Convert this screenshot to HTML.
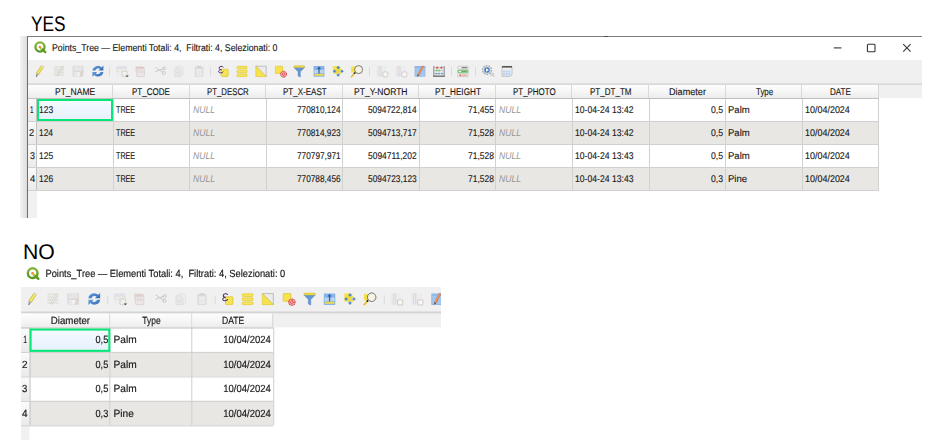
<!DOCTYPE html>
<html lang="it"><head><meta charset="utf-8"><title>Points_Tree</title>
<style>
html,body{margin:0;padding:0;background:#fff}
body{width:940px;height:440px;overflow:hidden;position:relative;text-rendering:geometricPrecision;font-family:"Liberation Sans",sans-serif;color:#161616}
.big{position:absolute;font-size:21.2px;line-height:22px;color:#000;white-space:nowrap}
.big span{display:inline-block;transform-origin:0 50%}
.win{position:absolute;transform-origin:0 0;font-size:9.8px}
.win *{position:absolute;box-sizing:border-box}
.x{height:12px;line-height:12px;white-space:nowrap;-webkit-text-stroke:.12px #1a1a1a}
.w2 .x{-webkit-text-stroke:.16px #1a1a1a}
.w2 .null{-webkit-text-stroke:0}
.x span{position:static;display:inline-block;white-space:nowrap;transform-origin:0 50%}
.ic{overflow:visible}
.tb{left:0;top:0;background:#f0f0f0}
.tbl{background:linear-gradient(#e2e2e2,#d6d6d6)}
.w2 .tbl{background:#d3d3d3}
.sep{top:7.6px;width:1px;height:8.4px;background:#dcdcdc}
.hbg{left:0;background:#f0f0f0}
.rh{left:0;background:#f1f1f1}
.h{background:linear-gradient(#fdfdfd,#f6f6f6 50%,#ececec);border-right:1px solid #d9d9d9}
.rhc{background:linear-gradient(#fbfbfb,#f3f3f3 50%,#eaeaea)}
.vl.v0{background:#c2c2c2}
.row{background:#fff}
.row.alt{background:#e9e7e4}
.null{-webkit-text-stroke:0}
.null span{font-style:italic;color:#969696}
.vl{width:1px;background:#d1d1d1}
.hl{height:1px;background:#d1d1d1}
.hl.first{background:#bfbfbf}
.sel{border:2px solid #08e678;background:linear-gradient(#f4f9ff,#e7f1fc)}
</style></head><body>
<div class="big" style="left:30.6px;top:14px"><span style="transform:scaleX(.815)">YES</span></div>
<div class="big" style="left:23px;top:242px"><span style="transform:scaleX(1.0)">NO</span></div>

<div style="position:absolute;left:20px;top:36px;width:8px;height:181.6px;background:linear-gradient(90deg,#f4f4f4,#dadada)"></div>
<div style="position:absolute;left:27px;top:36px;width:895px;height:181.6px;border-top:1px solid #7c7c7c;border-left:1px solid #6e6e6e;box-sizing:border-box;overflow:hidden"></div>
<div style="position:absolute;left:604px;top:35.6px;width:3.6px;height:1.4px;background:#4a4a4a"></div>
<div style="position:absolute;left:28px;top:37px;width:894px;height:180.6px;overflow:hidden">
<div class="win" style="left:0;top:22.700000000000003px">
<svg class="ic" style="left:5.80px;top:-18.50px;width:12px;height:12px" viewBox="0 0 12 12"><defs><linearGradient id="qg" x1="0" y1="0" x2="0" y2="1"><stop offset="0" stop-color="#82b63c"/><stop offset="1" stop-color="#56981f"/></linearGradient></defs><circle cx="6" cy="6" r="4.55" fill="none" stroke="url(#qg)" stroke-width="2.3"/><path d="M7.2 7.7 L11.3 11.2" stroke="#5c9c24" stroke-width="2.3" stroke-linecap="round"/><circle cx="5.8" cy="6.1" r="1.25" fill="#f08a28"/><path d="M6.7 7.1 L7.9 8.2" stroke="#e6dc3c" stroke-width="1.3"/></svg>
<div class="x ttl" style="left:23.80px;top:-16.70px"><span style="transform:scaleX(0.894)">Points_Tree — Elementi Totali: 4,  Filtrati: 4, Selezionati: 0</span></div>
<div class="tb" style="width:894px;height:24.9px">
<svg class="ic" style="left:5.83px;top:5.30px;width:12px;height:12px" viewBox="0 0 12 12"><path d="M7.3 .4 L9.8 1.8 L4.8 9.5 L2.3 7.9 Z" fill="#e4d23a" stroke="#bfae28" stroke-width=".35"/><path d="M8.45 1.3 L3.6 8.6" stroke="#f7f0a4" stroke-width=".95"/><path d="M7.3 .4 L9.8 1.8 L9.25 2.65 L6.75 1.25Z" fill="#dedede"/><path d="M2.3 7.9 L4.8 9.5 L3.35 10.95 L2.15 10.25Z" fill="#a2a2a2"/><path d="M2.15 10.25 L3.35 10.95 L2 12.1Z" fill="#333"/></svg>
<svg class="ic" style="left:25.10px;top:5.30px;width:12px;height:12px" viewBox="0 0 12 12"><rect x=".8" y="1.2" width="10.2" height="1.9" rx=".5" fill="#e2e2db"/><rect x=".8" y="3.75" width="10.2" height="1.9" rx=".5" fill="#e2e2db"/><rect x=".8" y="6.3" width="10.2" height="1.9" rx=".5" fill="#e2e2db"/><rect x=".8" y="8.85" width="10.2" height="1.9" rx=".5" fill="#e2e2db"/><path d="M4.2 11.1 L10.1 1.3" stroke="#cdc8c8" stroke-width="1.9"/><path d="M4.5 10.6 L9.9 1.7" stroke="#f1eded" stroke-width="1"/></svg>
<svg class="ic" style="left:43.90px;top:5.30px;width:12px;height:12px" viewBox="0 0 12 12"><rect x=".5" y=".9" width="11" height="10.8" rx="1" fill="#dbdbdb" stroke="#e6e6e6" stroke-width=".5"/><rect x="1.9" y="1.8" width="8" height="3.6" fill="#ececec"/><path d="M1.9 3H9.9M1.9 4.2H9.9" stroke="#dcdcdc" stroke-width=".5"/><rect x="2.4" y="7.2" width="5.6" height="4" fill="#f1f1f1"/><rect x="3.6" y="8" width="1" height="2.4" fill="#d6d8dc"/><path d="M8.2 11.4 L10.9 5.8" stroke="#e0d0c8" stroke-width="1.6"/></svg>
<svg class="ic" style="left:63.60px;top:5.30px;width:12px;height:12px" viewBox="0 0 12 12"><defs><linearGradient id="rg" x1="0" y1="0" x2="1" y2="1"><stop offset="0" stop-color="#6a9edb"/><stop offset="1" stop-color="#2f6bb6"/></linearGradient></defs><path d="M.3 5.5 A5.6 5.6 0 0 1 9.6 2.3 L11.4 .6 L11.4 5.5 L6.6 5.5 L8 4 A3 3 0 0 0 3.3 5.5 Z" fill="url(#rg)"/><path d="M11.5 6.9 A5.6 5.6 0 0 1 2.2 10.1 L.4 11.8 L.4 6.9 L5.2 6.9 L3.8 8.4 A3 3 0 0 0 8.5 6.9 Z" fill="url(#rg)"/></svg>
<i class="sep" style="left:80.90px"></i>
<svg class="ic" style="left:88.20px;top:5.30px;width:12px;height:12px" viewBox="0 0 12 12"><rect x=".5" y="1.2" width="10.2" height="10" fill="#e9eaed"/><rect x=".5" y="1.2" width="10.2" height="2.2" fill="#dfe1e7"/><rect x=".5" y="3.9" width="10.2" height="2.4" fill="none" stroke="#dedbd0" stroke-width=".5"/><path d="M.5 8.8H10.7M3.9 3.4V11.2M7.3 3.4V11.2" stroke="#f2f3f5" stroke-width=".6"/><rect x="6.1" y="6.2" width="5.2" height="5.4" rx=".9" fill="#f1f0ec" stroke="#cbc8bc" stroke-width=".7"/><path d="M9.4 10.6 L12.8 10.6 L11.1 12.2Z" fill="#4c4c4c"/></svg>
<svg class="ic" style="left:106.30px;top:5.30px;width:12px;height:12px" viewBox="0 0 12 12"><rect x="1.2" y="1" width="8" height="6" fill="#e7e0da"/><rect x="2" y="2" width="8.6" height="1.1" fill="#d9c8c8"/><rect x="2.7" y="3.8" width="7.7" height="7.8" rx=".6" fill="#ece6e6" stroke="#dac9ca" stroke-width=".7"/><rect x="4.2" y="5.6" width="1.9" height="2.6" fill="#e1d6d6"/><rect x="7" y="5.6" width="1.9" height="2.6" fill="#e1d6d6"/></svg>
<svg class="ic" style="left:126.30px;top:5.30px;width:12px;height:12px" viewBox="0 0 12 12"><path d="M1.4 2.4 L9.2 7.4 M1.2 6.6 L9.4 3.6" stroke="#c6c6c6" stroke-width=".9" fill="none"/><circle cx="10.1" cy="3.5" r="1.4" fill="none" stroke="#cbc0c0" stroke-width=".85"/><circle cx="9.8" cy="8" r="1.5" fill="none" stroke="#cbc0c0" stroke-width=".85"/></svg>
<svg class="ic" style="left:145.30px;top:5.30px;width:12px;height:12px" viewBox="0 0 12 12"><path d="M4.2 1.2 H8.6 L10.6 3.2 V9.6 H4.2Z" fill="#ededed" stroke="#dedede" stroke-width=".6"/><path d="M1.6 3.2 H6 L8.2 5.4 V11.6 H1.6Z" fill="#e7e7e7" stroke="#d8d8d8" stroke-width=".6"/><path d="M3 7.5H6.6M3 9.3H6.6" stroke="#dadada" stroke-width=".6"/></svg>
<svg class="ic" style="left:164.50px;top:5.30px;width:12px;height:12px" viewBox="0 0 12 12"><rect x="1.7" y="1.6" width="8.7" height="10.2" rx=".9" fill="#dcdcda"/><rect x="4" y=".8" width="4.1" height="1.9" fill="#d2d2d0"/><rect x="3.3" y="3.9" width="5.6" height="6.9" fill="#ececec"/><path d="M4.4 6.8H7.8M4.4 8.6H7.8" stroke="#dedede" stroke-width=".6"/></svg>
<i class="sep" style="left:182.20px"></i>
<svg class="ic" style="left:188.70px;top:5.30px;width:12px;height:12px" viewBox="0 0 12 12"><rect x="4.2" y="4.2" width="7" height="7.2" rx=".7" fill="#f5e455" stroke="#dcc120" stroke-width=".65"/><path d="M6.4 2.3 C5.4 .9 2 1 2.1 3.1 C2.2 4.3 3.4 4.7 4.5 4.7 C3.1 4.7 1.3 5.3 1.7 6.8 C2.2 8.5 5.4 8.2 6.4 6.6" fill="none" stroke="#56306f" stroke-width="1"/></svg>
<svg class="ic" style="left:208.10px;top:5.30px;width:12px;height:12px" viewBox="0 0 12 12"><rect x=".9" y="1.3" width="10.2" height="2.6" rx=".8" fill="#f6e55c" stroke="#dcc21e" stroke-width=".55"/><rect x=".9" y="5.15" width="10.2" height="2.6" rx=".8" fill="#f6e55c" stroke="#dcc21e" stroke-width=".55"/><rect x=".9" y="9" width="10.2" height="2.6" rx=".8" fill="#f6e55c" stroke="#dcc21e" stroke-width=".55"/></svg>
<svg class="ic" style="left:227.30px;top:5.30px;width:12px;height:12px" viewBox="0 0 12 12"><path d="M.8 1.2 H11.2 V11.6 Z" fill="#ebebeb" stroke="#a2a2a2" stroke-width=".6"/><path d="M.8 1.2 L11.2 11.6 H.8Z" fill="#f5e24e" stroke="#dcc21e" stroke-width=".55"/></svg>
<svg class="ic" style="left:246.80px;top:5.30px;width:12px;height:12px" viewBox="0 0 12 12"><rect x=".4" y="1.2" width="7.4" height="7.2" rx=".6" fill="#f5e24e" stroke="#dcc21e" stroke-width=".6"/><circle cx="8.6" cy="9.2" r="3" fill="#f0a8a8" stroke="#d63030" stroke-width="1" stroke-dasharray="1 .55"/><circle cx="8.6" cy="9.2" r="1.3" fill="none" stroke="#d63030" stroke-width=".9" stroke-dasharray=".9 .5"/></svg>
<svg class="ic" style="left:265.40px;top:5.30px;width:12px;height:12px" viewBox="0 0 12 12"><path d="M1.2 1.4 H11.3 V2.8 L7.3 6.8 V12 L5.1 10.9 V6.8 L1.2 2.8Z" fill="#6797d3" stroke="#4a7cba" stroke-width=".45"/><rect x="1" y=".7" width="10.5" height="1.9" rx=".7" fill="#f0dc4a" stroke="#c9b52c" stroke-width=".4"/></svg>
<svg class="ic" style="left:284.60px;top:5.30px;width:12px;height:12px" viewBox="0 0 12 12"><rect x=".6" y="1" width="10.8" height="10.8" rx=".6" fill="#86b3e8"/><rect x="1.5" y="5" width="9" height="3.2" fill="#c7dbf1"/><path d="M3.8 5V8.2M8.2 5V8.2" stroke="#9dc0ea" stroke-width=".6"/><rect x="1.5" y="8.8" width="9" height="2" fill="#efd84a"/><path d="M6 1.3 L8 3.9 H6.65 V8.4 H5.35 V3.9 H4Z" fill="#2f62a0"/></svg>
<svg class="ic" style="left:303.60px;top:5.30px;width:12px;height:12px" viewBox="0 0 12 12"><rect x=".8" y="1" width="7.4" height="7.4" fill="#f5e24e"/><path d="M3.6 3.6L8.8 8.8M8.8 3.6L3.6 8.8" stroke="#eed940" stroke-width="1.7"/><path d="M6.2 1 L7.7 2.7 L6.2 4 L4.7 2.7Z M6.2 11.6 L7.7 9.9 L6.2 8.6 L4.7 9.9Z M1 6.3 L2.7 4.8 L4 6.3 L2.7 7.8Z M11.5 6.3 L9.8 4.8 L8.5 6.3 L9.8 7.8Z" fill="#4f8acb" stroke="#3a70b0" stroke-width=".3"/></svg>
<svg class="ic" style="left:323.30px;top:5.30px;width:12px;height:12px" viewBox="0 0 12 12"><rect x=".2" y="1.5" width="4.4" height="6" fill="#f4e04a"/><circle cx="7.6" cy="4.6" r="4" fill="#f6f3e2" stroke="#4a4a4a" stroke-width=".7"/><path d="M3.3 8.6 L.5 11.7" stroke="#e6b820" stroke-width="1.5" stroke-linecap="round"/><circle cx="3.6" cy="8.1" r=".95" fill="#1f1f1f"/></svg>
<i class="sep" style="left:341.20px"></i>
<svg class="ic" style="left:348.00px;top:5.30px;width:12px;height:12px" viewBox="0 0 12 12"><rect x=".4" y="1.2" width="9.8" height="10" fill="#e6eaf1"/><path d="M.4 3.6H10.2M.4 6H10.2M7.2 1.2V7" stroke="#f1f3f7" stroke-width=".5"/><rect x="2.4" y=".9" width="3.2" height="10.5" rx=".5" fill="#dddbd2"/><rect x="3.3" y="1.5" width="1.1" height="9.4" fill="#ebeae4"/><rect x="6.9" y="6.9" width="4.9" height="5" rx="1" fill="#f6f6f4" stroke="#cfccc1" stroke-width=".95"/></svg>
<svg class="ic" style="left:367.30px;top:5.30px;width:12px;height:12px" viewBox="0 0 12 12"><rect x=".4" y="1.2" width="9.8" height="10" fill="#e9e9ef"/><path d="M.4 3.6H10.2M.4 6H10.2M7.2 1.2V7" stroke="#f3f3f7" stroke-width=".5"/><rect x="2.4" y=".9" width="3.2" height="10.5" rx=".5" fill="#e0d9d9"/><rect x="3.3" y="1.5" width="1.1" height="9.4" fill="#ece6e6"/><rect x="6.9" y="6.9" width="4.9" height="5" rx="1" fill="#f6f6f4" stroke="#d5cbcb" stroke-width=".95"/></svg>
<svg class="ic" style="left:385.60px;top:5.30px;width:12px;height:12px" viewBox="0 0 12 12"><rect x=".6" y="1" width="10.8" height="10.8" rx=".6" fill="#8fb8e8"/><rect x="1.4" y="3.2" width="4.2" height="7.8" fill="#a8c8ee"/><rect x="6.4" y="3.2" width="4.2" height="7.8" fill="#a8c8ee"/><path d="M1.4 5.8H10.6M1.4 8.4H10.6" stroke="#8fb8e8" stroke-width=".5"/><path d="M3.2 11.4 L3.7 9.4 L8.2 .7 L9.7 1.5 L5.1 10.2Z" fill="#e8844a" stroke="#bf6228" stroke-width=".35"/><path d="M8.6 1.3 L4.2 9.6" stroke="#f3b088" stroke-width=".5"/><path d="M3.2 11.4 L3.7 9.4 L5.1 10.2Z" fill="#4a4a4a"/></svg>
<svg class="ic" style="left:404.90px;top:5.30px;width:12px;height:12px" viewBox="0 0 12 12"><rect x=".4" y="1" width="11.2" height="10.8" fill="#ebebeb"/><path d="M.8 1V11.8M11.2 1V11.8" stroke="#7d7d7d" stroke-width=".9"/><path d="M.4 11.2H11.6" stroke="#666" stroke-width="1.3"/><path d="M1.2 2.6H10.8M1.2 5.6H10.8M1.2 8.6H10.8" stroke="#a4a4a4" stroke-width=".5"/><rect x="3.2" y="1.7" width="1.9" height="1.9" transform="rotate(45 4.15 2.65)" fill="#e44848"/><rect x="7.5" y="1.7" width="1.9" height="1.9" transform="rotate(45 8.45 2.65)" fill="#e44848"/><circle cx="3.7" cy="5.6" r="1" fill="#72cc72"/><circle cx="6.2" cy="5.6" r="1" fill="#72cc72"/><circle cx="3.4" cy="8.6" r=".95" fill="#5f9ad6"/><circle cx="6" cy="8.6" r=".95" fill="#5f9ad6"/><circle cx="9" cy="8.6" r=".95" fill="#5f9ad6"/></svg>
<i class="sep" style="left:423.25px"></i>
<svg class="ic" style="left:429.40px;top:5.30px;width:12px;height:12px" viewBox="0 0 12 12"><rect x=".8" y="1.2" width="10.4" height="2.8" rx=".4" fill="#f6f6f6" stroke="#a8a8a8" stroke-width=".5"/><rect x="4.6" y="1.95" width="5.6" height="1.3" fill="#858585"/><rect x=".8" y="5" width="10.4" height="2.8" rx=".4" fill="#8fd98a" stroke="#5cb85c" stroke-width=".5"/><rect x="4.6" y="5.75" width="5" height="1.3" fill="#869686"/><rect x="2" y="5.95" width="2" height=".9" fill="#f2fff2"/><rect x=".8" y="8.8" width="10.4" height="2.8" rx=".4" fill="#f6f6f6" stroke="#a8a8a8" stroke-width=".5"/><rect x="4.4" y="9.6" width="5.6" height="1.2" fill="#f0a0a0"/><circle cx="3.2" cy="10.2" r=".8" fill="#d92c2c"/></svg>
<i class="sep" style="left:447.10px"></i>
<svg class="ic" style="left:453.80px;top:5.30px;width:12px;height:12px" viewBox="0 0 12 12"><circle cx="5" cy="5" r="4.4" fill="none" stroke="#a0a0a0" stroke-width="1.3" stroke-dasharray="1.7 1"/><circle cx="5" cy="5" r="3.2" fill="#4a7fc0" stroke="#e3e9f0" stroke-width=".6"/><path d="M4 3.3 L6.9 5 L4 6.7Z" fill="#fff"/><path d="M7.8 7.8 L9.4 10.8 L10.2 9.8 L11.8 11.6 L12.3 11.1 L10.8 9.3 L11.9 8.7Z" fill="#f4f4f4" stroke="#9a9a9a" stroke-width=".5"/></svg>
<svg class="ic" style="left:473.20px;top:5.30px;width:12px;height:12px" viewBox="0 0 12 12"><path d="M1 1.4 H11 V8.6 Q11 11.4 8.4 11.4 H1Z" fill="#eeeeee" stroke="#a6a6a6" stroke-width=".6"/><rect x="1" y="1" width="10" height="1.6" fill="#565656"/><rect x="2" y="5.6" width="7.4" height="4.8" fill="#b7d1ef"/><path d="M1.8 7.7H9.8M4.4 5.2V10.4M7.2 5.2V10.4" stroke="#e8f0fa" stroke-width=".6"/></svg>
</div>
<i class="tbl" style="left:0;top:23.60px;width:894px;height:1.3px"></i>
<div class="hbg" style="top:24.9px;width:894px;height:13.800000000000004px"></div>
<div class="rh" style="top:24.9px;width:8.50px;height:133.00px"></div>
<div class="h" style="left:0;top:24.9px;width:9.50px;height:13.800000000000004px;border-right:0"></div>
<div class="h" style="left:8.50px;top:24.9px;width:76.57px;height:13.800000000000004px"></div>
<div class="x ht" style="left:26.76px;top:27.30px"><span style="transform:scaleX(0.867)">PT_NAME</span></div>
<div class="h" style="left:85.07px;top:24.9px;width:76.57px;height:13.800000000000004px"></div>
<div class="x ht" style="left:104.46px;top:27.30px"><span style="transform:scaleX(0.818)">PT_CODE</span></div>
<div class="h" style="left:161.64px;top:24.9px;width:76.57px;height:13.800000000000004px"></div>
<div class="x ht" style="left:179.10px;top:27.30px"><span style="transform:scaleX(0.799)">PT_DESCR</span></div>
<div class="h" style="left:238.21px;top:24.9px;width:76.57px;height:13.800000000000004px"></div>
<div class="x ht" style="left:254.60px;top:27.30px"><span style="transform:scaleX(0.819)">PT_X-EAST</span></div>
<div class="h" style="left:314.78px;top:24.9px;width:76.57px;height:13.800000000000004px"></div>
<div class="x ht" style="left:326.48px;top:27.30px"><span style="transform:scaleX(0.870)">PT_Y-NORTH</span></div>
<div class="h" style="left:391.35px;top:24.9px;width:76.57px;height:13.800000000000004px"></div>
<div class="x ht" style="left:406.63px;top:27.30px"><span style="transform:scaleX(0.835)">PT_HEIGHT</span></div>
<div class="h" style="left:467.92px;top:24.9px;width:76.57px;height:13.800000000000004px"></div>
<div class="x ht" style="left:484.92px;top:27.30px"><span style="transform:scaleX(0.811)">PT_PHOTO</span></div>
<div class="h" style="left:544.49px;top:24.9px;width:76.57px;height:13.800000000000004px"></div>
<div class="x ht" style="left:562.18px;top:27.30px"><span style="transform:scaleX(0.821)">PT_DT_TM</span></div>
<div class="h" style="left:621.06px;top:24.9px;width:76.57px;height:13.800000000000004px"></div>
<div class="x ht" style="left:640.77px;top:27.30px"><span style="transform:scaleX(0.929)">Diameter</span></div>
<div class="h" style="left:697.63px;top:24.9px;width:76.57px;height:13.800000000000004px"></div>
<div class="x ht" style="left:727.61px;top:27.30px"><span style="transform:scaleX(0.809)">Type</span></div>
<div class="h" style="left:774.20px;top:24.9px;width:76.57px;height:13.800000000000004px"></div>
<div class="x ht" style="left:802.09px;top:27.30px"><span style="transform:scaleX(0.822)">DATE</span></div>
<div class="row" style="left:8.50px;top:38.70px;width:842.27px;height:23.0px"></div>
<div class="rhc" style="left:0;top:38.70px;width:8.50px;height:23.0px"></div>
<div class="row alt" style="left:8.50px;top:61.70px;width:842.27px;height:23.0px"></div>
<div class="rhc" style="left:0;top:61.70px;width:8.50px;height:23.0px"></div>
<div class="row" style="left:8.50px;top:84.70px;width:842.27px;height:23.0px"></div>
<div class="rhc" style="left:0;top:84.70px;width:8.50px;height:23.0px"></div>
<div class="row alt" style="left:8.50px;top:107.70px;width:842.27px;height:23.0px"></div>
<div class="rhc" style="left:0;top:107.70px;width:8.50px;height:23.0px"></div>
<i class="vl v0" style="left:8.00px;top:38.70px;height:92.00px"></i>
<i class="vl" style="left:84.57px;top:38.70px;height:92.00px"></i>
<i class="vl" style="left:161.14px;top:38.70px;height:92.00px"></i>
<i class="vl" style="left:237.71px;top:38.70px;height:92.00px"></i>
<i class="vl" style="left:314.28px;top:38.70px;height:92.00px"></i>
<i class="vl" style="left:390.85px;top:38.70px;height:92.00px"></i>
<i class="vl" style="left:467.42px;top:38.70px;height:92.00px"></i>
<i class="vl" style="left:543.99px;top:38.70px;height:92.00px"></i>
<i class="vl" style="left:620.56px;top:38.70px;height:92.00px"></i>
<i class="vl" style="left:697.13px;top:38.70px;height:92.00px"></i>
<i class="vl" style="left:773.70px;top:38.70px;height:92.00px"></i>
<i class="vl" style="left:850.27px;top:38.70px;height:92.00px"></i>
<i class="hl first" style="left:0;top:38.20px;width:850.77px"></i>
<i class="hl" style="left:0;top:61.20px;width:850.77px"></i>
<i class="hl" style="left:0;top:84.20px;width:850.77px"></i>
<i class="hl" style="left:0;top:107.20px;width:850.77px"></i>
<i class="hl" style="left:0;top:130.20px;width:850.77px"></i>
<div class="sel" style="left:8.80px;top:39.00px;width:76.27px;height:22.10px"></div>
<div class="x rn" style="left:2.22px;top:45.40px"><span style="transform:scaleX(0.657)">1</span></div>
<div class="x " style="left:11.01px;top:45.40px"><span style="transform:scaleX(0.868)">123</span></div>
<div class="x " style="left:88.08px;top:45.40px"><span style="transform:scaleX(0.733)">TREE</span></div>
<div class="x null" style="left:164.53px;top:45.40px"><span style="transform:scaleX(0.875)">NULL</span></div>
<div class="x " style="left:268.67px;top:45.40px"><span style="transform:scaleX(0.841)">770810,124</span></div>
<div class="x " style="left:340.22px;top:45.40px"><span style="transform:scaleX(0.848)">5094722,814</span></div>
<div class="x " style="left:439.50px;top:45.40px"><span style="transform:scaleX(0.867)">71,455</span></div>
<div class="x null" style="left:470.81px;top:45.40px"><span style="transform:scaleX(0.875)">NULL</span></div>
<div class="x " style="left:546.99px;top:45.40px"><span style="transform:scaleX(0.881)">10-04-24 13:42</span></div>
<div class="x " style="left:683.13px;top:45.40px"><span style="transform:scaleX(0.885)">0,5</span></div>
<div class="x " style="left:700.02px;top:45.40px"><span style="transform:scaleX(0.975)">Palm</span></div>
<div class="x " style="left:776.68px;top:45.40px"><span style="transform:scaleX(0.914)">10/04/2024</span></div>
<div class="x rn" style="left:1.48px;top:68.40px"><span style="transform:scaleX(0.954)">2</span></div>
<div class="x " style="left:11.02px;top:68.40px"><span style="transform:scaleX(0.859)">124</span></div>
<div class="x " style="left:88.08px;top:68.40px"><span style="transform:scaleX(0.733)">TREE</span></div>
<div class="x null" style="left:164.53px;top:68.40px"><span style="transform:scaleX(0.875)">NULL</span></div>
<div class="x " style="left:268.67px;top:68.40px"><span style="transform:scaleX(0.843)">770814,923</span></div>
<div class="x " style="left:340.22px;top:68.40px"><span style="transform:scaleX(0.851)">5094713,717</span></div>
<div class="x " style="left:439.50px;top:68.40px"><span style="transform:scaleX(0.867)">71,528</span></div>
<div class="x null" style="left:470.81px;top:68.40px"><span style="transform:scaleX(0.875)">NULL</span></div>
<div class="x " style="left:546.99px;top:68.40px"><span style="transform:scaleX(0.881)">10-04-24 13:42</span></div>
<div class="x " style="left:683.13px;top:68.40px"><span style="transform:scaleX(0.885)">0,5</span></div>
<div class="x " style="left:700.02px;top:68.40px"><span style="transform:scaleX(0.975)">Palm</span></div>
<div class="x " style="left:776.68px;top:68.40px"><span style="transform:scaleX(0.914)">10/04/2024</span></div>
<div class="x rn" style="left:1.64px;top:91.40px"><span style="transform:scaleX(0.914)">3</span></div>
<div class="x " style="left:11.01px;top:91.40px"><span style="transform:scaleX(0.868)">125</span></div>
<div class="x " style="left:88.08px;top:91.40px"><span style="transform:scaleX(0.733)">TREE</span></div>
<div class="x null" style="left:164.53px;top:91.40px"><span style="transform:scaleX(0.875)">NULL</span></div>
<div class="x " style="left:268.67px;top:91.40px"><span style="transform:scaleX(0.844)">770797,971</span></div>
<div class="x " style="left:340.21px;top:91.40px"><span style="transform:scaleX(0.862)">5094711,202</span></div>
<div class="x " style="left:439.50px;top:91.40px"><span style="transform:scaleX(0.867)">71,528</span></div>
<div class="x null" style="left:470.81px;top:91.40px"><span style="transform:scaleX(0.875)">NULL</span></div>
<div class="x " style="left:546.99px;top:91.40px"><span style="transform:scaleX(0.880)">10-04-24 13:43</span></div>
<div class="x " style="left:683.13px;top:91.40px"><span style="transform:scaleX(0.885)">0,5</span></div>
<div class="x " style="left:700.02px;top:91.40px"><span style="transform:scaleX(0.975)">Palm</span></div>
<div class="x " style="left:776.68px;top:91.40px"><span style="transform:scaleX(0.914)">10/04/2024</span></div>
<div class="x rn" style="left:1.51px;top:114.40px"><span style="transform:scaleX(0.960)">4</span></div>
<div class="x " style="left:11.01px;top:114.40px"><span style="transform:scaleX(0.868)">126</span></div>
<div class="x " style="left:88.08px;top:114.40px"><span style="transform:scaleX(0.733)">TREE</span></div>
<div class="x null" style="left:164.53px;top:114.40px"><span style="transform:scaleX(0.875)">NULL</span></div>
<div class="x " style="left:268.67px;top:114.40px"><span style="transform:scaleX(0.843)">770788,456</span></div>
<div class="x " style="left:340.22px;top:114.40px"><span style="transform:scaleX(0.851)">5094723,123</span></div>
<div class="x " style="left:439.50px;top:114.40px"><span style="transform:scaleX(0.867)">71,528</span></div>
<div class="x null" style="left:470.81px;top:114.40px"><span style="transform:scaleX(0.875)">NULL</span></div>
<div class="x " style="left:546.99px;top:114.40px"><span style="transform:scaleX(0.880)">10-04-24 13:43</span></div>
<div class="x " style="left:683.13px;top:114.40px"><span style="transform:scaleX(0.885)">0,3</span></div>
<div class="x " style="left:700.02px;top:114.40px"><span style="transform:scaleX(0.975)">Pine</span></div>
<div class="x " style="left:776.68px;top:114.40px"><span style="transform:scaleX(0.914)">10/04/2024</span></div>
<svg style="left:803.5px;top:-17.9px;width:90px;height:12px" viewBox="0 0 90 12"><path d="M1.8 5.9H9.4" stroke="#333" stroke-width="1.1"/><rect x="35.4" y="2.3" width="7.6" height="7.4" rx="1" fill="none" stroke="#333" stroke-width="1.1"/><path d="M71.2 2.2L78.6 9.6M78.6 2.2L71.2 9.6" stroke="#333" stroke-width="1.05"/></svg>
</div></div>

<div style="position:absolute;left:21.05px;top:256.6px;width:420.1px;height:200px;overflow:hidden">
<div class="win w2" style="left:0;top:30px;transform:scale(1.064)">
<svg class="ic" style="left:4.75px;top:-18.70px;width:12px;height:12px" viewBox="0 0 12 12"><defs><linearGradient id="qg" x1="0" y1="0" x2="0" y2="1"><stop offset="0" stop-color="#82b63c"/><stop offset="1" stop-color="#56981f"/></linearGradient></defs><circle cx="6" cy="6" r="4.55" fill="none" stroke="url(#qg)" stroke-width="2.3"/><path d="M7.2 7.7 L11.3 11.2" stroke="#5c9c24" stroke-width="2.3" stroke-linecap="round"/><circle cx="5.8" cy="6.1" r="1.25" fill="#f08a28"/><path d="M6.7 7.1 L7.9 8.2" stroke="#e6dc3c" stroke-width="1.3"/></svg>
<div class="x ttl" style="left:23.00px;top:-16.55px"><span style="transform:scaleX(0.894)">Points_Tree — Elementi Totali: 4,  Filtrati: 4, Selezionati: 0</span></div>
<div class="tb" style="width:395px;height:24.6px">
<svg class="ic" style="left:4.98px;top:5.30px;width:12px;height:12px" viewBox="0 0 12 12"><path d="M7.3 .4 L9.8 1.8 L4.8 9.5 L2.3 7.9 Z" fill="#e4d23a" stroke="#bfae28" stroke-width=".35"/><path d="M8.45 1.3 L3.6 8.6" stroke="#f7f0a4" stroke-width=".95"/><path d="M7.3 .4 L9.8 1.8 L9.25 2.65 L6.75 1.25Z" fill="#dedede"/><path d="M2.3 7.9 L4.8 9.5 L3.35 10.95 L2.15 10.25Z" fill="#a2a2a2"/><path d="M2.15 10.25 L3.35 10.95 L2 12.1Z" fill="#333"/></svg>
<svg class="ic" style="left:24.25px;top:5.30px;width:12px;height:12px" viewBox="0 0 12 12"><rect x=".8" y="1.2" width="10.2" height="1.9" rx=".5" fill="#e2e2db"/><rect x=".8" y="3.75" width="10.2" height="1.9" rx=".5" fill="#e2e2db"/><rect x=".8" y="6.3" width="10.2" height="1.9" rx=".5" fill="#e2e2db"/><rect x=".8" y="8.85" width="10.2" height="1.9" rx=".5" fill="#e2e2db"/><path d="M4.2 11.1 L10.1 1.3" stroke="#cdc8c8" stroke-width="1.9"/><path d="M4.5 10.6 L9.9 1.7" stroke="#f1eded" stroke-width="1"/></svg>
<svg class="ic" style="left:43.05px;top:5.30px;width:12px;height:12px" viewBox="0 0 12 12"><rect x=".5" y=".9" width="11" height="10.8" rx="1" fill="#dbdbdb" stroke="#e6e6e6" stroke-width=".5"/><rect x="1.9" y="1.8" width="8" height="3.6" fill="#ececec"/><path d="M1.9 3H9.9M1.9 4.2H9.9" stroke="#dcdcdc" stroke-width=".5"/><rect x="2.4" y="7.2" width="5.6" height="4" fill="#f1f1f1"/><rect x="3.6" y="8" width="1" height="2.4" fill="#d6d8dc"/><path d="M8.2 11.4 L10.9 5.8" stroke="#e0d0c8" stroke-width="1.6"/></svg>
<svg class="ic" style="left:62.75px;top:5.30px;width:12px;height:12px" viewBox="0 0 12 12"><defs><linearGradient id="rg" x1="0" y1="0" x2="1" y2="1"><stop offset="0" stop-color="#6a9edb"/><stop offset="1" stop-color="#2f6bb6"/></linearGradient></defs><path d="M.3 5.5 A5.6 5.6 0 0 1 9.6 2.3 L11.4 .6 L11.4 5.5 L6.6 5.5 L8 4 A3 3 0 0 0 3.3 5.5 Z" fill="url(#rg)"/><path d="M11.5 6.9 A5.6 5.6 0 0 1 2.2 10.1 L.4 11.8 L.4 6.9 L5.2 6.9 L3.8 8.4 A3 3 0 0 0 8.5 6.9 Z" fill="url(#rg)"/></svg>
<i class="sep" style="left:80.90px"></i>
<svg class="ic" style="left:87.35px;top:5.30px;width:12px;height:12px" viewBox="0 0 12 12"><rect x=".5" y="1.2" width="10.2" height="10" fill="#e9eaed"/><rect x=".5" y="1.2" width="10.2" height="2.2" fill="#dfe1e7"/><rect x=".5" y="3.9" width="10.2" height="2.4" fill="none" stroke="#dedbd0" stroke-width=".5"/><path d="M.5 8.8H10.7M3.9 3.4V11.2M7.3 3.4V11.2" stroke="#f2f3f5" stroke-width=".6"/><rect x="6.1" y="6.2" width="5.2" height="5.4" rx=".9" fill="#f1f0ec" stroke="#cbc8bc" stroke-width=".7"/><path d="M9.4 10.6 L12.8 10.6 L11.1 12.2Z" fill="#4c4c4c"/></svg>
<svg class="ic" style="left:105.45px;top:5.30px;width:12px;height:12px" viewBox="0 0 12 12"><rect x="1.2" y="1" width="8" height="6" fill="#e7e0da"/><rect x="2" y="2" width="8.6" height="1.1" fill="#d9c8c8"/><rect x="2.7" y="3.8" width="7.7" height="7.8" rx=".6" fill="#ece6e6" stroke="#dac9ca" stroke-width=".7"/><rect x="4.2" y="5.6" width="1.9" height="2.6" fill="#e1d6d6"/><rect x="7" y="5.6" width="1.9" height="2.6" fill="#e1d6d6"/></svg>
<svg class="ic" style="left:125.45px;top:5.30px;width:12px;height:12px" viewBox="0 0 12 12"><path d="M1.4 2.4 L9.2 7.4 M1.2 6.6 L9.4 3.6" stroke="#c6c6c6" stroke-width=".9" fill="none"/><circle cx="10.1" cy="3.5" r="1.4" fill="none" stroke="#cbc0c0" stroke-width=".85"/><circle cx="9.8" cy="8" r="1.5" fill="none" stroke="#cbc0c0" stroke-width=".85"/></svg>
<svg class="ic" style="left:144.45px;top:5.30px;width:12px;height:12px" viewBox="0 0 12 12"><path d="M4.2 1.2 H8.6 L10.6 3.2 V9.6 H4.2Z" fill="#ededed" stroke="#dedede" stroke-width=".6"/><path d="M1.6 3.2 H6 L8.2 5.4 V11.6 H1.6Z" fill="#e7e7e7" stroke="#d8d8d8" stroke-width=".6"/><path d="M3 7.5H6.6M3 9.3H6.6" stroke="#dadada" stroke-width=".6"/></svg>
<svg class="ic" style="left:163.65px;top:5.30px;width:12px;height:12px" viewBox="0 0 12 12"><rect x="1.7" y="1.6" width="8.7" height="10.2" rx=".9" fill="#dcdcda"/><rect x="4" y=".8" width="4.1" height="1.9" fill="#d2d2d0"/><rect x="3.3" y="3.9" width="5.6" height="6.9" fill="#ececec"/><path d="M4.4 6.8H7.8M4.4 8.6H7.8" stroke="#dedede" stroke-width=".6"/></svg>
<i class="sep" style="left:182.20px"></i>
<svg class="ic" style="left:187.85px;top:5.30px;width:12px;height:12px" viewBox="0 0 12 12"><rect x="4.2" y="4.2" width="7" height="7.2" rx=".7" fill="#f5e455" stroke="#dcc120" stroke-width=".65"/><path d="M6.4 2.3 C5.4 .9 2 1 2.1 3.1 C2.2 4.3 3.4 4.7 4.5 4.7 C3.1 4.7 1.3 5.3 1.7 6.8 C2.2 8.5 5.4 8.2 6.4 6.6" fill="none" stroke="#56306f" stroke-width="1"/></svg>
<svg class="ic" style="left:207.25px;top:5.30px;width:12px;height:12px" viewBox="0 0 12 12"><rect x=".9" y="1.3" width="10.2" height="2.6" rx=".8" fill="#f6e55c" stroke="#dcc21e" stroke-width=".55"/><rect x=".9" y="5.15" width="10.2" height="2.6" rx=".8" fill="#f6e55c" stroke="#dcc21e" stroke-width=".55"/><rect x=".9" y="9" width="10.2" height="2.6" rx=".8" fill="#f6e55c" stroke="#dcc21e" stroke-width=".55"/></svg>
<svg class="ic" style="left:226.45px;top:5.30px;width:12px;height:12px" viewBox="0 0 12 12"><path d="M.8 1.2 H11.2 V11.6 Z" fill="#ebebeb" stroke="#a2a2a2" stroke-width=".6"/><path d="M.8 1.2 L11.2 11.6 H.8Z" fill="#f5e24e" stroke="#dcc21e" stroke-width=".55"/></svg>
<svg class="ic" style="left:245.95px;top:5.30px;width:12px;height:12px" viewBox="0 0 12 12"><rect x=".4" y="1.2" width="7.4" height="7.2" rx=".6" fill="#f5e24e" stroke="#dcc21e" stroke-width=".6"/><circle cx="8.6" cy="9.2" r="3" fill="#f0a8a8" stroke="#d63030" stroke-width="1" stroke-dasharray="1 .55"/><circle cx="8.6" cy="9.2" r="1.3" fill="none" stroke="#d63030" stroke-width=".9" stroke-dasharray=".9 .5"/></svg>
<svg class="ic" style="left:264.55px;top:5.30px;width:12px;height:12px" viewBox="0 0 12 12"><path d="M1.2 1.4 H11.3 V2.8 L7.3 6.8 V12 L5.1 10.9 V6.8 L1.2 2.8Z" fill="#6797d3" stroke="#4a7cba" stroke-width=".45"/><rect x="1" y=".7" width="10.5" height="1.9" rx=".7" fill="#f0dc4a" stroke="#c9b52c" stroke-width=".4"/></svg>
<svg class="ic" style="left:283.75px;top:5.30px;width:12px;height:12px" viewBox="0 0 12 12"><rect x=".6" y="1" width="10.8" height="10.8" rx=".6" fill="#86b3e8"/><rect x="1.5" y="5" width="9" height="3.2" fill="#c7dbf1"/><path d="M3.8 5V8.2M8.2 5V8.2" stroke="#9dc0ea" stroke-width=".6"/><rect x="1.5" y="8.8" width="9" height="2" fill="#efd84a"/><path d="M6 1.3 L8 3.9 H6.65 V8.4 H5.35 V3.9 H4Z" fill="#2f62a0"/></svg>
<svg class="ic" style="left:302.75px;top:5.30px;width:12px;height:12px" viewBox="0 0 12 12"><rect x=".8" y="1" width="7.4" height="7.4" fill="#f5e24e"/><path d="M3.6 3.6L8.8 8.8M8.8 3.6L3.6 8.8" stroke="#eed940" stroke-width="1.7"/><path d="M6.2 1 L7.7 2.7 L6.2 4 L4.7 2.7Z M6.2 11.6 L7.7 9.9 L6.2 8.6 L4.7 9.9Z M1 6.3 L2.7 4.8 L4 6.3 L2.7 7.8Z M11.5 6.3 L9.8 4.8 L8.5 6.3 L9.8 7.8Z" fill="#4f8acb" stroke="#3a70b0" stroke-width=".3"/></svg>
<svg class="ic" style="left:322.45px;top:5.30px;width:12px;height:12px" viewBox="0 0 12 12"><rect x=".2" y="1.5" width="4.4" height="6" fill="#f4e04a"/><circle cx="7.6" cy="4.6" r="4" fill="#f6f3e2" stroke="#4a4a4a" stroke-width=".7"/><path d="M3.3 8.6 L.5 11.7" stroke="#e6b820" stroke-width="1.5" stroke-linecap="round"/><circle cx="3.6" cy="8.1" r=".95" fill="#1f1f1f"/></svg>
<i class="sep" style="left:341.20px"></i>
<svg class="ic" style="left:347.15px;top:5.30px;width:12px;height:12px" viewBox="0 0 12 12"><rect x=".4" y="1.2" width="9.8" height="10" fill="#e6eaf1"/><path d="M.4 3.6H10.2M.4 6H10.2M7.2 1.2V7" stroke="#f1f3f7" stroke-width=".5"/><rect x="2.4" y=".9" width="3.2" height="10.5" rx=".5" fill="#dddbd2"/><rect x="3.3" y="1.5" width="1.1" height="9.4" fill="#ebeae4"/><rect x="6.9" y="6.9" width="4.9" height="5" rx="1" fill="#f6f6f4" stroke="#cfccc1" stroke-width=".95"/></svg>
<svg class="ic" style="left:366.45px;top:5.30px;width:12px;height:12px" viewBox="0 0 12 12"><rect x=".4" y="1.2" width="9.8" height="10" fill="#e9e9ef"/><path d="M.4 3.6H10.2M.4 6H10.2M7.2 1.2V7" stroke="#f3f3f7" stroke-width=".5"/><rect x="2.4" y=".9" width="3.2" height="10.5" rx=".5" fill="#e0d9d9"/><rect x="3.3" y="1.5" width="1.1" height="9.4" fill="#ece6e6"/><rect x="6.9" y="6.9" width="4.9" height="5" rx="1" fill="#f6f6f4" stroke="#d5cbcb" stroke-width=".95"/></svg>
<svg class="ic" style="left:384.75px;top:5.30px;width:12px;height:12px" viewBox="0 0 12 12"><rect x=".6" y="1" width="10.8" height="10.8" rx=".6" fill="#8fb8e8"/><rect x="1.4" y="3.2" width="4.2" height="7.8" fill="#a8c8ee"/><rect x="6.4" y="3.2" width="4.2" height="7.8" fill="#a8c8ee"/><path d="M1.4 5.8H10.6M1.4 8.4H10.6" stroke="#8fb8e8" stroke-width=".5"/><path d="M3.2 11.4 L3.7 9.4 L8.2 .7 L9.7 1.5 L5.1 10.2Z" fill="#e8844a" stroke="#bf6228" stroke-width=".35"/><path d="M8.6 1.3 L4.2 9.6" stroke="#f3b088" stroke-width=".5"/><path d="M3.2 11.4 L3.7 9.4 L5.1 10.2Z" fill="#4a4a4a"/></svg>
</div>
<i class="tbl" style="left:0;top:22.70px;width:395px;height:1.9px"></i>
<div class="hbg" style="top:24.6px;width:395px;height:13.75px"></div>
<div class="rh" style="top:24.6px;width:8.13px;height:124.27px"></div>
<div class="h" style="left:0;top:24.6px;width:9.13px;height:13.75px;border-right:0"></div>
<div class="h" style="left:8.13px;top:24.6px;width:75.75px;height:13.75px"></div>
<div class="x ht" style="left:27.83px;top:26.80px"><span style="transform:scaleX(0.929)">Diameter</span></div>
<div class="h" style="left:83.88px;top:24.6px;width:77.02px;height:13.75px"></div>
<div class="x ht" style="left:114.48px;top:26.80px"><span style="transform:scaleX(0.809)">Type</span></div>
<div class="h" style="left:160.90px;top:24.6px;width:76.46px;height:13.75px"></div>
<div class="x ht" style="left:189.14px;top:26.80px"><span style="transform:scaleX(0.822)">DATE</span></div>
<div class="row" style="left:8.13px;top:38.35px;width:229.23px;height:23.0px"></div>
<div class="rhc" style="left:0;top:38.35px;width:8.13px;height:23.0px"></div>
<div class="row alt" style="left:8.13px;top:61.35px;width:229.23px;height:23.0px"></div>
<div class="rhc" style="left:0;top:61.35px;width:8.13px;height:23.0px"></div>
<div class="row" style="left:8.13px;top:84.35px;width:229.23px;height:23.0px"></div>
<div class="rhc" style="left:0;top:84.35px;width:8.13px;height:23.0px"></div>
<div class="row alt" style="left:8.13px;top:107.35px;width:229.23px;height:23.0px"></div>
<div class="rhc" style="left:0;top:107.35px;width:8.13px;height:23.0px"></div>
<i class="vl v0" style="left:7.63px;top:38.35px;height:92.00px"></i>
<i class="vl" style="left:83.38px;top:38.35px;height:92.00px"></i>
<i class="vl" style="left:160.40px;top:38.35px;height:92.00px"></i>
<i class="vl" style="left:236.86px;top:38.35px;height:92.00px"></i>
<i class="hl first" style="left:0;top:37.85px;width:237.36px"></i>
<i class="hl" style="left:0;top:60.85px;width:237.36px"></i>
<i class="hl" style="left:0;top:83.85px;width:237.36px"></i>
<i class="hl" style="left:0;top:106.85px;width:237.36px"></i>
<i class="hl" style="left:0;top:129.85px;width:237.36px"></i>
<div class="sel" style="left:8.43px;top:38.65px;width:75.45px;height:22.10px"></div>
<div class="x rn" style="left:1.78px;top:45.25px"><span style="transform:scaleX(0.657)">1</span></div>
<div class="x " style="left:69.68px;top:45.25px"><span style="transform:scaleX(0.885)">0,5</span></div>
<div class="x " style="left:86.82px;top:45.25px"><span style="transform:scaleX(0.975)">Palm</span></div>
<div class="x " style="left:190.29px;top:45.25px"><span style="transform:scaleX(0.914)">10/04/2024</span></div>
<div class="x rn" style="left:1.05px;top:68.25px"><span style="transform:scaleX(0.954)">2</span></div>
<div class="x " style="left:69.68px;top:68.25px"><span style="transform:scaleX(0.885)">0,5</span></div>
<div class="x " style="left:86.82px;top:68.25px"><span style="transform:scaleX(0.975)">Palm</span></div>
<div class="x " style="left:190.29px;top:68.25px"><span style="transform:scaleX(0.914)">10/04/2024</span></div>
<div class="x rn" style="left:1.20px;top:91.25px"><span style="transform:scaleX(0.914)">3</span></div>
<div class="x " style="left:69.68px;top:91.25px"><span style="transform:scaleX(0.885)">0,5</span></div>
<div class="x " style="left:86.82px;top:91.25px"><span style="transform:scaleX(0.975)">Palm</span></div>
<div class="x " style="left:190.29px;top:91.25px"><span style="transform:scaleX(0.914)">10/04/2024</span></div>
<div class="x rn" style="left:1.08px;top:114.25px"><span style="transform:scaleX(0.960)">4</span></div>
<div class="x " style="left:69.68px;top:114.25px"><span style="transform:scaleX(0.885)">0,3</span></div>
<div class="x " style="left:86.82px;top:114.25px"><span style="transform:scaleX(0.975)">Pine</span></div>
<div class="x " style="left:190.29px;top:114.25px"><span style="transform:scaleX(0.914)">10/04/2024</span></div>
</div></div>
</body></html>
